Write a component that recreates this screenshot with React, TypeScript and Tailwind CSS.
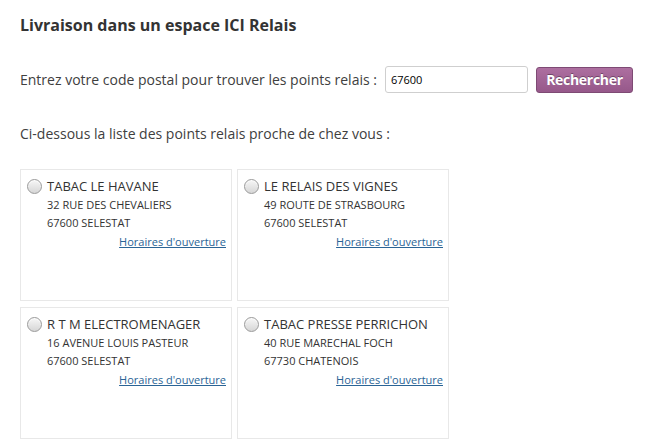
const relays = [
  { name: "TABAC LE HAVANE", street: "32 RUE DES CHEVALIERS", city: "67600 SELESTAT" },
  { name: "LE RELAIS DES VIGNES", street: "49 ROUTE DE STRASBOURG", city: "67600 SELESTAT" },
  { name: "R T M ELECTROMENAGER", street: "16 AVENUE LOUIS PASTEUR", city: "67600 SELESTAT" },
  { name: "TABAC PRESSE PERRICHON", street: "40 RUE MARECHAL FOCH", city: "67730 CHATENOIS" },
  { name: "", street: "", city: "" },
  { name: "", street: "", city: "" },
];

function Radio() {
  return (
    <span className="inline-block h-[15px] w-[15px] shrink-0 rounded-full border border-[#9a9a9a] bg-gradient-to-b from-[#f7f7f7] to-[#d6d6d6] shadow-[inset_0_1px_1px_rgba(255,255,255,0.8)]" />
  );
}

export default function App() {
  return (
    <div className="min-h-screen bg-white pl-5 pt-[13px] font-['Open_Sans',sans-serif] text-[#404040]">
      <h2 className="text-[16px] font-bold leading-6 text-[#333]">
        Livraison dans un espace ICI Relais
      </h2>

      <div className="mt-[29px] flex items-center">
        <label className="text-[14px] leading-5">
          Entrez votre code postal pour trouver les points relais :
        </label>
        <input
          defaultValue="67600"
          className="ml-[8px] h-[27px] w-[143px] rounded-[3px] border border-[#cfcfcf] px-[5px] text-[11px] text-black outline-none"
        />
        <button className="ml-2 h-[26px] w-[97px] rounded-[3px] border border-[#7e4a74] bg-gradient-to-b from-[#ad6fa0] to-[#96588a] text-[14px] font-bold tracking-[-0.3px] text-white [text-shadow:0_-1px_0_rgba(0,0,0,0.35)]">
          Rechercher
        </button>
      </div>

      <p className="mt-[31px] text-[14px] leading-5">
        Ci-dessous la liste des points relais proche de chez vous :
      </p>

      <div className="mt-[25px] grid grid-cols-[212px_212px] gap-x-[5px] gap-y-[6px]">
        {relays.map((r, i) => (
          <div key={i} className="h-[132px] border border-[#e8e8e8] bg-white pl-[6px] pr-[5px] pt-[7px]">
            {r.name && (
              <>
                <div className="flex items-center gap-[5px]">
                  <Radio />
                  <span className="text-[13px] leading-[18px] text-[#333]">{r.name}</span>
                </div>
                <div className="pl-[20px] text-[11px] uppercase leading-[18px] text-[#333]">
                  <p className="mt-[1px]">{r.street}</p>
                  <p>{r.city}</p>
                </div>
                <div className="mt-[1px] text-right text-[11px] leading-[18px]">
                  <a href="#" className="text-[#2a6496] underline">
                    Horaires d'ouverture
                  </a>
                </div>
              </>
            )}
          </div>
        ))}
      </div>
    </div>
  );
}
